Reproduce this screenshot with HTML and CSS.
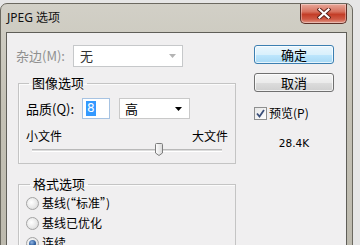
FILE: index.html
```html
<!DOCTYPE html>
<html>
<head>
<meta charset="utf-8">
<link rel="stylesheet" href="styles.css">
</head>
<body>
<div class="win">
  <div class="titlebar">
    <span class="title">JPEG 选项</span>
    <div class="close">
      <svg width="14" height="11" viewBox="0 0 14 11">
        <path d="M2.5 1.5 L11.5 9.5 M11.5 1.5 L2.5 9.5" stroke="#5a2018" stroke-width="4" stroke-linecap="square"/>
        <path d="M2.5 1.5 L11.5 9.5 M11.5 1.5 L2.5 9.5" stroke="#ffffff" stroke-width="2.2" stroke-linecap="square"/>
      </svg>
    </div>
  </div>
  <div class="client">
    <div class="left">
      <div class="matte">
        <span class="lbl disabled">杂边(M):</span>
        <div class="select select-off">
          <span class="val">无</span>
          <svg class="arrow" width="7" height="4" viewBox="0 0 7 4"><path d="M0 0 H7 L3.5 4 Z" fill="#b4b4b4"/></svg>
        </div>
      </div>
      <fieldset class="group g1">
        <legend>图像选项</legend>
        <div class="quality">
          <span class="lbl">品质(Q):</span>
          <div class="input"><span class="sel">8</span></div>
          <div class="select select-q">
            <span class="val">高</span>
            <svg class="arrow" width="7" height="4" viewBox="0 0 7 4"><path d="M0 0 H7 L3.5 4 Z" fill="#000"/></svg>
          </div>
        </div>
        <div class="sizes"><span>小文件</span><span>大文件</span></div>
        <div class="slider">
          <div class="track"></div>
          <div class="thumb" style="left:66.7%">
            <svg width="8" height="13" viewBox="0 0 8 13">
              <defs><linearGradient id="tg" x1="0" y1="0" x2="1" y2="0"><stop offset="0" stop-color="#ffffff"/><stop offset="1" stop-color="#d8d8d8"/></linearGradient></defs>
              <path d="M1.5 0.5 H6.5 Q7.5 0.5 7.5 1.5 V10 L4 12.5 L0.5 10 V1.5 Q0.5 0.5 1.5 0.5 Z" fill="url(#tg)" stroke="#7d7d7d"/>
            </svg>
          </div>
        </div>
      </fieldset>
      <fieldset class="group g2">
        <legend>格式选项</legend>
        <div class="radio"><span class="rb"></span>基线(“标准”)</div>
        <div class="radio"><span class="rb"></span>基线已优化</div>
        <div class="radio"><span class="rb on"></span>连续</div>
      </fieldset>
    </div>
    <div class="right">
      <div class="btn btn-default">确定</div>
      <div class="btn">取消</div>
      <div class="check">
        <span class="cb">
          <svg width="9" height="9" viewBox="0 0 9 9"><path d="M1 4.5 L3.5 7.5 L8 1" fill="none" stroke="#3b4f7a" stroke-width="1.8"/></svg>
        </span>
        预览(P)
      </div>
      <div class="size">28.4K</div>
    </div>
  </div>
</div>
</body>
</html>
```
FILE: styles.css
```css
html, body {
  margin: 0;
  padding: 0;
}
body {
  width: 360px;
  height: 245px;
  overflow: hidden;
  background: #e6e6e6;
  font-family: "Noto Sans CJK SC", "Noto Sans", sans-serif;
  font-size: 12px;
  color: #000;
}
.win {
  margin-top: 3px;
  width: 353px;
  height: 260px;
  border: 1px solid #6b6960;
  border-radius: 7px 7px 0 0;
  background: linear-gradient(180deg, #d2d0c7 0%, #c4c1b5 40%, #bcb9ad 100%);
  display: flex;
  flex-direction: column;
  box-sizing: border-box;
}
.titlebar {
  height: 28px;
  display: flex;
  justify-content: space-between;
  align-items: flex-start;
  flex-shrink: 0;
}
.title {
  margin-left: 6px;
  margin-top: 6px;
  line-height: 16px;
  font-family: "Noto Sans", "Noto Sans CJK SC", sans-serif;
  font-size: 12px;
  color: #111;
}
.close {
  width: 45px;
  height: 19px;
  margin-right: 5px;
  border: 1px solid #5e3028;
  border-top: none;
  border-radius: 0 0 5px 5px;
  background: linear-gradient(180deg, #e8a89a 0%, #d7725f 40%, #c33d27 55%, #cf5a45 80%, #e09a8a 100%);
  display: flex;
  align-items: center;
  justify-content: center;
  box-shadow: inset 0 0 0 1px rgba(255,255,255,0.35);
}
.client {
  margin: 0 5px;
  flex: 1;
  border: 1px solid #5f5e58;
  background: #f0eff0;
  display: flex;
}
.left {
  width: 229px;
  flex-shrink: 0;
}
.matte {
  margin-top: 12px;
  margin-left: 9px;
  height: 22px;
  display: flex;
  align-items: center;
}
.lbl {
  line-height: 16px;
  font-size: 13px;
  width: 57px;
  flex-shrink: 0;
}
.disabled {
  color: #8f8f8f;
}
.select {
  box-sizing: border-box;
  height: 21px;
  background: #fff;
  display: flex;
  align-items: center;
  justify-content: space-between;
  padding: 0 6px 0 6px;
}
.select-off {
  width: 110px;
  height: 22px;
  border: 1px solid #c6c8ca;
}
.select-off .val {
  color: #333;
}
.select-q {
  margin-left: 9px;
  width: 71px;
  border: 1px solid #c9c9c9;
  padding: 0 7px 0 5px;
}
.val {
  line-height: 16px;
  font-size: 13px;
}
.group {
  margin: 0;
  padding: 0;
  border: 1px solid #c4c4c4;
  box-shadow: inset 1px 1px 0 #fbfbfb;
  min-inline-size: 0;
  margin-left: 11px;
  width: 218px;
  box-sizing: border-box;
}
.group legend {
  padding: 0 3px;
  line-height: 16px;
  font-size: 13px;
}
.g1 {
  margin-top: 8px;
  padding: 7px 7px 6px 7px;
}
.g1 legend {
  margin-left: 3px;
}
.quality {
  display: flex;
  align-items: center;
  height: 21px;
}
.quality .lbl {
  width: 56px;
}
.input {
  box-sizing: border-box;
  width: 28px;
  height: 21px;
  border: 1px solid #a7c3e2;
  background: #fff;
  display: flex;
  align-items: center;
  padding-left: 3px;
}
.sel {
  background: #3399ff;
  color: #fff;
  line-height: 15px;
  padding: 0 1px;
  font-family: "DejaVu Sans", sans-serif;
  font-size: 12px;
}
.sizes {
  margin-top: 9px;
  display: flex;
  justify-content: space-between;
  line-height: 16px;
}
.slider {
  position: relative;
  margin: 0 6px;
  height: 13px;
}
.track {
  position: relative;
  top: 5px;
  height: 1px;
  border-top: 1px solid #b9b9b9;
  border-bottom: 1px solid #ffffff;
  background: #dcdcdc;
}
.thumb {
  position: absolute;
  top: -1px;
  width: 8px;
  height: 13px;
  transform: translateX(-50%);
}
.thumb svg {
  display: block;
}
.g2 {
  margin-top: 12px;
  padding: 1px 7px 10px 7px;
}
.g2 legend {
  margin-left: 4px;
}
.radio {
  display: flex;
  align-items: center;
  height: 20px;
  line-height: 16px;
}
.rb {
  box-sizing: border-box;
  width: 13px;
  height: 13px;
  border-radius: 50%;
  border: 1px solid #a3a3a3;
  background: radial-gradient(circle at 40% 40%, #ffffff 0%, #e6e6e6 60%, #cfcfcf 100%);
  margin-right: 3px;
  display: flex;
  align-items: center;
  justify-content: center;
}
.rb.on::after {
  content: "";
  width: 7px;
  height: 7px;
  border-radius: 50%;
  background: radial-gradient(circle at 40% 35%, #8fb4e4 0%, #2f5f9e 55%, #1b3c70 100%);
}
.right {
  margin-left: 18px;
  width: 80px;
  display: flex;
  flex-direction: column;
}
.btn {
  box-sizing: border-box;
  height: 19px;
  border: 1px solid #707070;
  border-radius: 3px;
  text-align: center;
  line-height: 17px;
  font-size: 13px;
  background: linear-gradient(180deg, #f4f4f4 0%, #ebebeb 50%, #dddddd 51%, #cfcfcf 100%);
  box-shadow: inset 0 0 0 1px rgba(255,255,255,0.7);
}
.btn-default {
  margin-top: 12px;
  border-color: #3c7fb1;
  background: linear-gradient(180deg, #eaf6fd 0%, #d9f0fc 50%, #bee6fd 51%, #a7d9f5 100%);
}
.btn + .btn {
  margin-top: 9px;
}
.check {
  margin-top: 13px;
  display: flex;
  align-items: center;
  line-height: 16px;
}
.cb {
  box-sizing: border-box;
  width: 13px;
  height: 13px;
  border: 1px solid #8e8f8f;
  background: linear-gradient(135deg, #e6e6e6, #ffffff);
  margin-right: 2px;
  display: flex;
  align-items: center;
  justify-content: center;
}
.cb svg {
  display: block;
}
.size {
  margin-top: 16px;
  text-align: center;
  font-family: "DejaVu Sans", sans-serif;
  font-size: 10.5px;
  line-height: 12px;
}
```
